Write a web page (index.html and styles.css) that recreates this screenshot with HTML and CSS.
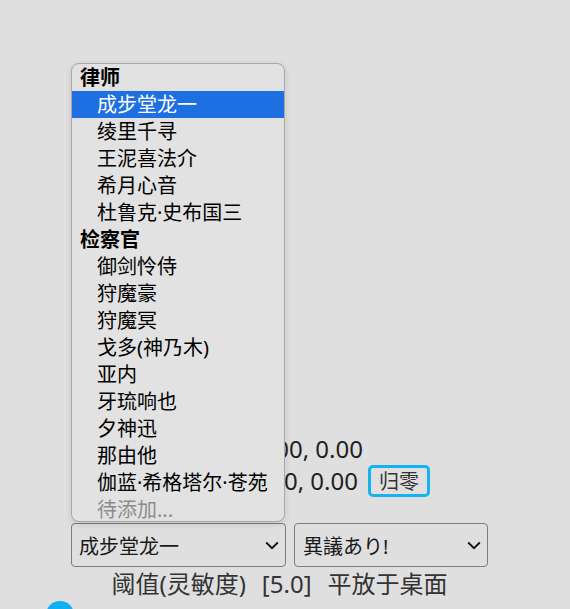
FILE: index.html
```html
<!DOCTYPE html>
<html lang="zh">
<head>
<meta charset="utf-8">
<link rel="stylesheet" href="styles.css">
</head>
<body>
<div class="page">
  <div class="readouts">
    <span class="readout r1">0.00, 0.00, 0.00</span>
    <span class="readout r2">0.00, 0.00, 0.00</span>
    <button class="zero-btn">归零</button>
  </div>
  <div class="selects">
    <div class="select sel-a"><span>成步堂龙一</span><svg class="chev" width="14" height="9" viewBox="0 0 14 9"><path d="M1.2 1.5 L7 7.2 L12.8 1.5" fill="none" stroke="#111" stroke-width="1.8"/></svg></div>
    <div class="select sel-b"><span>異議あり!</span><svg class="chev" width="14" height="9" viewBox="0 0 14 9"><path d="M1.2 1.5 L7 7.2 L12.8 1.5" fill="none" stroke="#111" stroke-width="1.8"/></svg></div>
  </div>
  <div class="status"><span>阈值(灵敏度)</span><span>[5.0]</span><span>平放于桌面</span></div>
  <div class="dot"></div>

  <div class="popup">
    <div class="group">律师</div>
    <div class="opt selected">成步堂龙一</div>
    <div class="opt">绫里千寻</div>
    <div class="opt">王泥喜法介</div>
    <div class="opt">希月心音</div>
    <div class="opt">杜鲁克·史布国三</div>
    <div class="group">检察官</div>
    <div class="opt">御剑怜侍</div>
    <div class="opt">狩魔豪</div>
    <div class="opt">狩魔冥</div>
    <div class="opt">戈多(神乃木)</div>
    <div class="opt">亚内</div>
    <div class="opt">牙琉响也</div>
    <div class="opt">夕神迅</div>
    <div class="opt">那由他</div>
    <div class="opt">伽蓝·希格塔尔·苍苑</div>
    <div class="opt disabled">待添加...</div>
  </div>
</div>
</body>
</html>
```

FILE: styles.css
```css
html, body {
  margin: 0;
  padding: 0;
  background: #dfdfdf;
  height: 100%;
  overflow: hidden;
}
.page {
  position: relative;
  width: 559px;
  padding-top: 433px;
  display: flex;
  flex-direction: column;
  align-items: center;
  font-family: "Noto Sans", "Noto Sans CJK SC", sans-serif;
  color: #222;
}
.readouts {
  align-self: flex-end;
  margin-right: 129px;
  display: grid;
  grid-template-columns: auto 62px;
  column-gap: 10px;
  grid-auto-rows: 32px;
  align-items: center;
}
.readout {
  font-size: 24px;
  line-height: 32px;
  white-space: nowrap;
  justify-self: end;
  color: #1e1e1e;
}
.r1 {
  grid-column: 1;
  grid-row: 1;
  margin-right: -5px;
}
.r2 {
  grid-column: 1;
  grid-row: 2;
}
.zero-btn {
  grid-column: 2;
  grid-row: 2;
  box-sizing: border-box;
  width: 62px;
  height: 32px;
  border: 3px solid #14b4f2;
  border-radius: 5px;
  background: #e0e0e0;
  font-family: "Noto Sans CJK SC", sans-serif;
  font-size: 20px;
  line-height: 24px;
  color: #333;
  padding: 0;
}
.selects {
  display: flex;
  gap: 8px;
  margin-top: 26px;
}
.select {
  box-sizing: border-box;
  height: 44px;
  border: 1px solid #7c7c7c;
  border-radius: 4px;
  display: flex;
  align-items: center;
  justify-content: space-between;
  padding: 0 6px 0 7px;
  font-family: "Noto Sans", "Noto Sans CJK SC", "Noto Sans CJK JP", sans-serif;
  font-size: 20px;
  color: #1a1a1a;
}
.sel-a { width: 215px; }
.sel-b { width: 194px; padding-left: 8px; }
.status {
  display: flex;
  gap: 16px;
  font-family: "Noto Sans", "Noto Sans CJK SC", sans-serif;
  font-size: 24px;
  line-height: 34px;
  color: #333;
  white-space: nowrap;
}
.dot {
  align-self: flex-start;
  margin-left: 46px;
  width: 28px;
  height: 28px;
  border-radius: 50%;
  background: #10b0f5;
}
.popup {
  position: absolute;
  left: 71px;
  top: 63px;
  width: 214px;
  box-sizing: border-box;
  height: 459px;
  background: #e2e2e2;
  border: 1px solid #a8a8a8;
  border-radius: 8px;
  box-shadow: 0 2px 6px rgba(0,0,0,0.12);
  font-family: "Noto Sans", "Noto Sans CJK SC", sans-serif;
  font-size: 20px;
  overflow: hidden;
}
.group, .opt {
  height: 27px;
  line-height: 27px;
  white-space: nowrap;
  color: #000;
}
.group {
  font-weight: bold;
  padding-left: 8px;
}
.opt {
  padding-left: 25px;
}
.opt.selected {
  background: #1e70e2;
  color: #fff;
}
.opt.disabled {
  color: #8c8c8c;
}
```
